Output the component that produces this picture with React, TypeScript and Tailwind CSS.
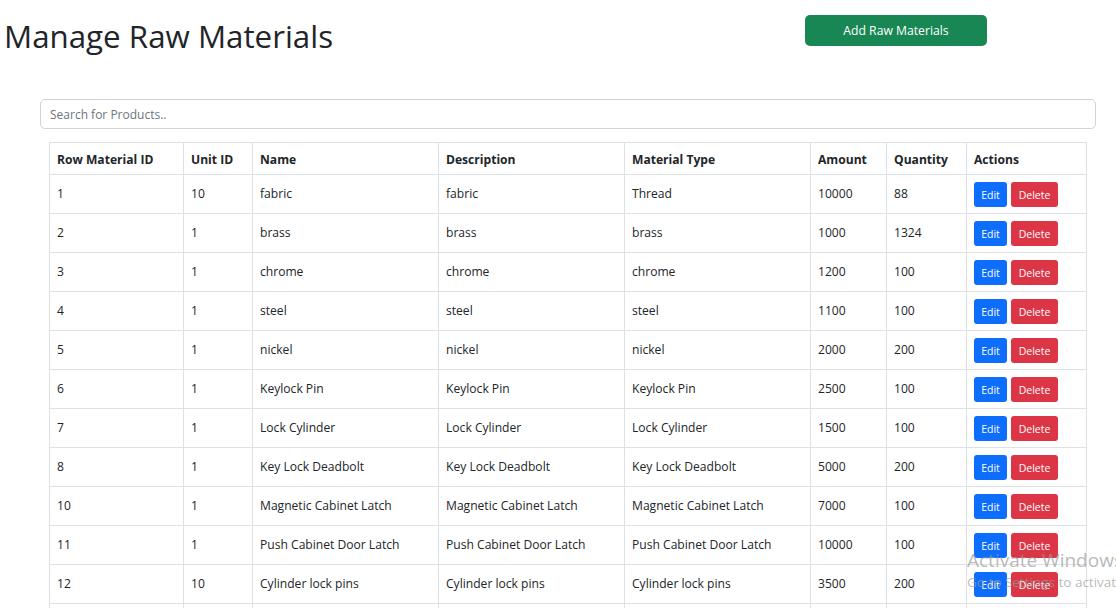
import React from "react";

type Material = {
  id: number;
  unitId: number;
  name: string;
  description: string;
  type: string;
  amount: number;
  quantity: number;
};

const materials: Material[] = [
  { id: 1, unitId: 10, name: "fabric", description: "fabric", type: "Thread", amount: 10000, quantity: 88 },
  { id: 2, unitId: 1, name: "brass", description: "brass", type: "brass", amount: 1000, quantity: 1324 },
  { id: 3, unitId: 1, name: "chrome", description: "chrome", type: "chrome", amount: 1200, quantity: 100 },
  { id: 4, unitId: 1, name: "steel", description: "steel", type: "steel", amount: 1100, quantity: 100 },
  { id: 5, unitId: 1, name: "nickel", description: "nickel", type: "nickel", amount: 2000, quantity: 200 },
  { id: 6, unitId: 1, name: "Keylock Pin", description: "Keylock Pin", type: "Keylock Pin", amount: 2500, quantity: 100 },
  { id: 7, unitId: 1, name: "Lock Cylinder", description: "Lock Cylinder", type: "Lock Cylinder", amount: 1500, quantity: 100 },
  { id: 8, unitId: 1, name: "Key Lock Deadbolt", description: "Key Lock Deadbolt", type: "Key Lock Deadbolt", amount: 5000, quantity: 200 },
  { id: 10, unitId: 1, name: "Magnetic Cabinet Latch", description: "Magnetic Cabinet Latch", type: "Magnetic Cabinet Latch", amount: 7000, quantity: 100 },
  { id: 11, unitId: 1, name: "Push Cabinet Door Latch", description: "Push Cabinet Door Latch", type: "Push Cabinet Door Latch", amount: 10000, quantity: 100 },
  { id: 12, unitId: 10, name: "Cylinder lock pins", description: "Cylinder lock pins", type: "Cylinder lock pins", amount: 3500, quantity: 200 },
];

const headers = ["Row Material ID", "Unit ID", "Name", "Description", "Material Type", "Amount", "Quantity", "Actions"];
const widths = ["w-[134px]", "w-[69px]", "w-[186px]", "w-[186px]", "w-[186px]", "w-[76px]", "w-[80px]", "w-[120px]"];

const cell = "border border-[#dee2e6] px-[7px] pt-[9px] align-top h-[39px]";
const actionCell = "border border-[#dee2e6] px-[7px] pt-[7px] align-top h-[39px]";

const App = () => {
  return (
    <div
      className="relative h-[608px] w-[1116px] overflow-hidden bg-white text-[#212529]"
      style={{ fontFamily: '"Open Sans", "Noto Sans", sans-serif' }}
    >
      <div className="flex items-start pt-[15px]">
        <h2 className="w-[805px] pl-[4px] pt-[2px] text-[31.3px] leading-[38px] font-normal">
          Manage Raw Materials
        </h2>
        <button className="h-[31px] w-[182px] rounded-[5px] bg-[#198754] pt-[1px] text-[12.2px] text-white">
          Add Raw Materials
        </button>
      </div>

      <div className="pl-[40px] pr-[20px] pt-[44px]">
        <input
          className="h-[30px] w-full rounded-[5px] border border-[#ced4da] px-[9px] text-[12px] outline-none placeholder:text-[#6c757d]"
          placeholder="Search for Products.."
        />
      </div>

      <div className="pl-[49px] pt-[13px]">
        <table className="w-[1037px] table-fixed border-collapse text-[12.1px] leading-[20px]">
          <colgroup>
            {widths.map((w, i) => (
              <col key={i} className={w} />
            ))}
          </colgroup>
          <thead>
            <tr>
              {headers.map((h) => (
                <th
                  key={h}
                  className="h-[32px] border border-[#dee2e6] px-[7px] pt-[7px] text-left align-top font-bold"
                >
                  {h}
                </th>
              ))}
            </tr>
          </thead>
          <tbody>
            {materials.map((m) => (
              <tr key={m.id}>
                <td className={cell}>{m.id}</td>
                <td className={cell}>{m.unitId}</td>
                <td className={cell}>{m.name}</td>
                <td className={cell}>{m.description}</td>
                <td className={cell}>{m.type}</td>
                <td className={cell}>{m.amount}</td>
                <td className={cell}>{m.quantity}</td>
                <td className={actionCell}>
                  <div className="flex gap-[4px]">
                    <button className="h-[25px] w-[33px] rounded-[3px] bg-[#0d6efd] text-[10.5px] text-white">
                      Edit
                    </button>
                    <button className="h-[25px] w-[47px] rounded-[3px] bg-[#dc3545] text-[10.5px] text-white">
                      Delete
                    </button>
                  </div>
                </td>
              </tr>
            ))}
            <tr>
              {headers.map((h) => (
                <td key={h} className={cell}></td>
              ))}
            </tr>
          </tbody>
        </table>
      </div>

      <div className="pointer-events-none absolute left-[967px] top-[548px] whitespace-nowrap text-[#9a9a9a]/70">
        <div className="text-[19px] leading-[24px]">Activate Windows</div>
        <div className="text-[13.5px] leading-[20px]">Go to Settings to activate Windows.</div>
      </div>
    </div>
  );
};

export default App;
